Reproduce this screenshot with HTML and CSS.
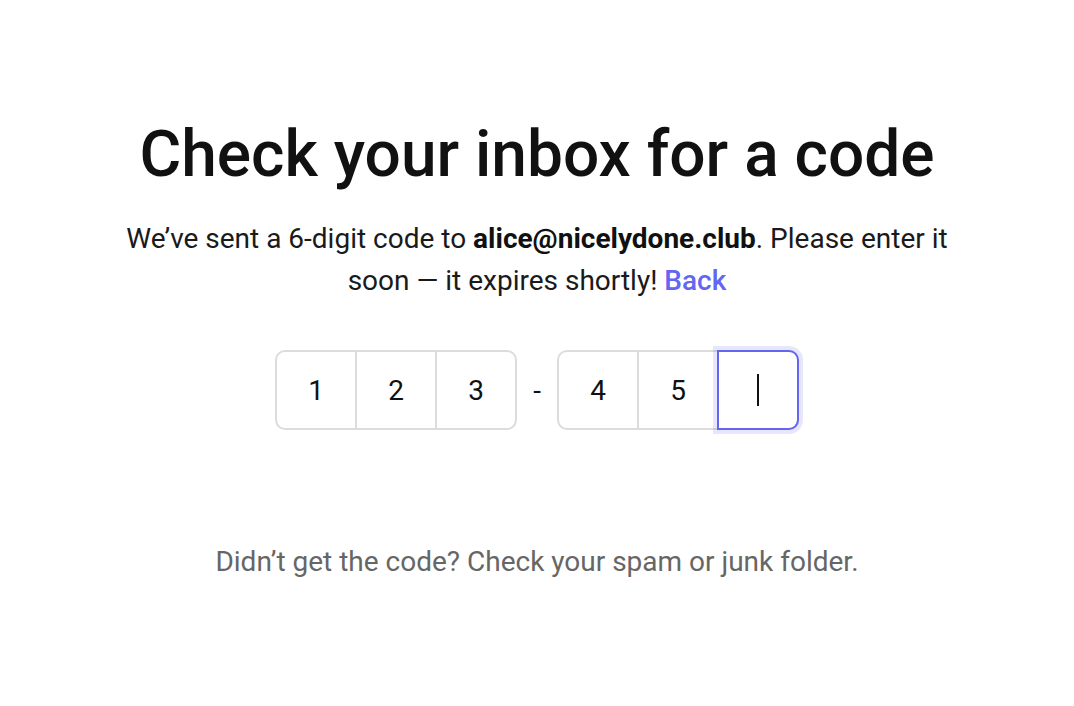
FILE: index.html
```html
<!DOCTYPE html>
<html lang="en">
<head>
<meta charset="utf-8">
<title>Check your inbox</title>
<link rel="stylesheet" href="styles.css">
</head>
<body>
<main class="page">
  <h1 class="title">Check your inbox for a code</h1>
  <p class="lead">We’ve sent a 6-digit code to <strong>alice@nicelydone.club</strong>. Please enter it soon — it expires shortly! <a class="back" href="#">Back</a></p>
  <div class="code">
    <div class="group">
      <div class="cell">1</div>
      <div class="cell">2</div>
      <div class="cell">3</div>
    </div>
    <div class="dash">-</div>
    <div class="group">
      <div class="cell">4</div>
      <div class="cell">5</div>
      <div class="cell active"><span class="caret"></span></div>
    </div>
  </div>
  <p class="hint">Didn’t get the code? Check your spam or junk folder.</p>
</main>
</body>
</html>
```

FILE: styles.css
```css
html, body {
  margin: 0;
  padding: 0;
  background: #ffffff;
}
body {
  font-family: Roboto, "Liberation Sans", sans-serif;
  color: #111111;
}
.page {
  display: flex;
  flex-direction: column;
  align-items: center;
  padding-top: 119px;
}
.title {
  margin: 0;
  font-size: 64px;
  line-height: 72px;
  font-weight: 500;
  color: #111111;
}
.lead {
  margin: 27px 0 0;
  max-width: 840px;
  text-align: center;
  font-size: 28px;
  line-height: 42px;
  color: #1a1a1a;
}
.lead strong {
  font-weight: 700;
  color: #111111;
}
.back {
  color: #6366f1;
  font-weight: 500;
  text-decoration: none;
}
.code {
  margin-top: 48px;
  display: flex;
  align-items: center;
}
.group {
  display: flex;
  border: 2px solid #dcdcdc;
  border-radius: 10px;
  height: 76px;
}
.cell {
  width: 78px;
  display: flex;
  align-items: center;
  justify-content: center;
  font-size: 28px;
  color: #111111;
}
.cell + .cell {
  border-left: 2px solid #dcdcdc;
}
.dash {
  width: 40px;
  text-align: center;
  font-size: 28px;
  color: #111111;
}
.cell.active {
  margin: -2px -2px -2px 0;
  width: 78px;
  height: 76px;
  border: 2px solid #6466f1;
  border-radius: 0 10px 10px 0;
  box-shadow: 0 0 0 4px rgba(99, 102, 241, 0.16);
}
.caret {
  display: block;
  width: 2px;
  height: 32px;
  background: #111111;
}
.hint {
  margin: 111px 0 0;
  font-size: 28px;
  line-height: 42px;
  color: #666666;
}
```
